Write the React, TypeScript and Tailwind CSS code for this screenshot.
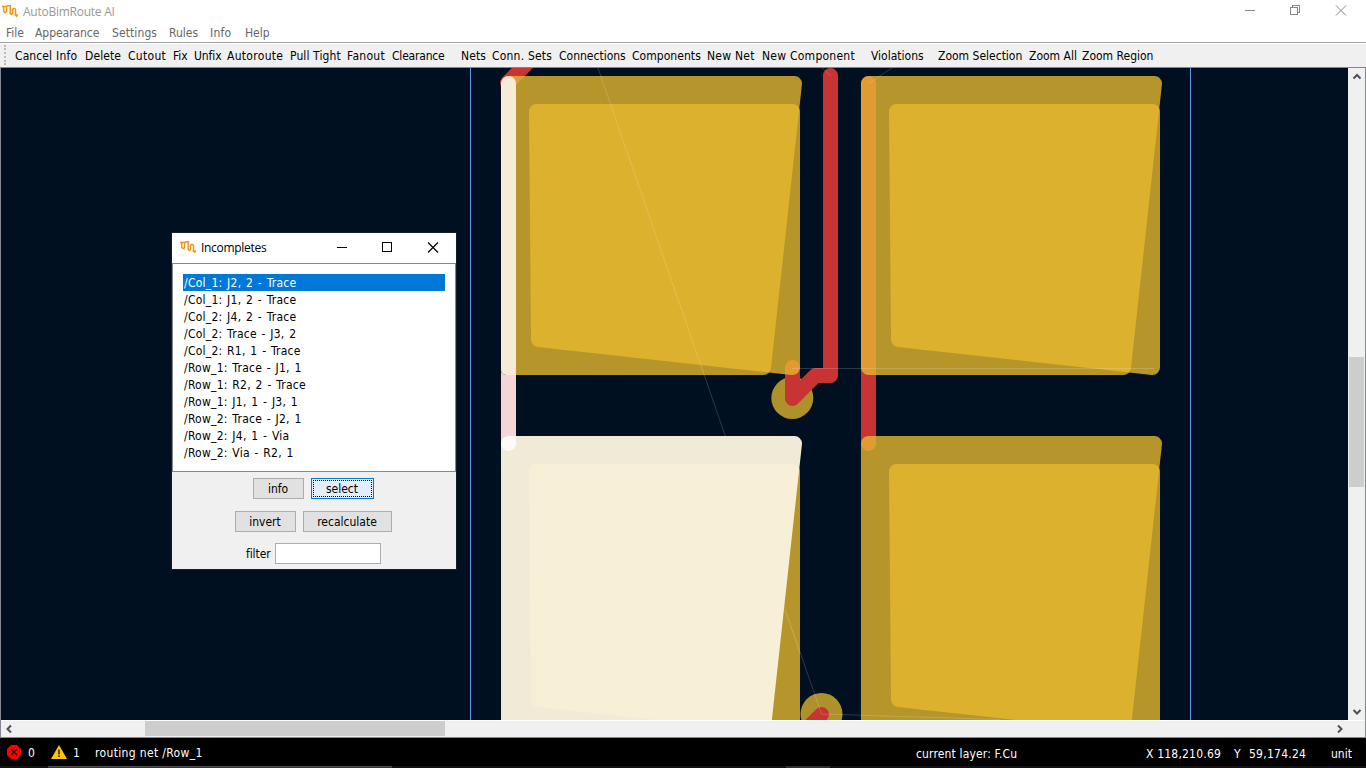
import React from "react";

const tools: [string, string][] = [
  ["Cancel", "w-[41px] tracking-[0.1px]"],
  ["Info", "w-[29px] tracking-[0.2px]"],
  ["Delete", "w-[43px] tracking-[0.1px]"],
  ["Cutout", "w-[45px] tracking-[0.3px]"],
  ["Fix", "w-[21px]"],
  ["Unfix", "w-[33px] tracking-[-0.1px]"],
  ["Autoroute", "w-[63px] tracking-[0.3px]"],
  ["Pull Tight", "w-[57px] tracking-[0.1px]"],
  ["Fanout", "w-[45px] tracking-[0.3px]"],
  ["Clearance", "w-[69px] tracking-[-0.2px]"],
  ["Nets", "w-[31px] tracking-[0.1px]"],
  ["Conn. Sets", "w-[67px] tracking-[0.2px]"],
  ["Connections", "w-[73px]"],
  ["Components", "w-[75px] tracking-[0.05px]"],
  ["New Net", "w-[55px] tracking-[0.25px]"],
  ["New Component", "w-[109px] tracking-[0.25px]"],
  ["Violations", "w-[67px]"],
  ["Zoom Selection", "w-[91px]"],
  ["Zoom All", "w-[53px]"],
  ["Zoom Region", "w-[80px]"],
];

const menus: [string, string][] = [
  ["File", "w-[29px]"],
  ["Appearance", "w-[77px] tracking-[-0.05px]"],
  ["Settings", "w-[57px] tracking-[0.1px]"],
  ["Rules", "w-[41px]"],
  ["Info", "w-[35px] tracking-[0.2px]"],
  ["Help", "w-[30px]"],
];

const incompletes = [
  "/Col_1: J2, 2 - Trace",
  "/Col_1: J1, 2 - Trace",
  "/Col_2: J4, 2 - Trace",
  "/Col_2: Trace - J3, 2",
  "/Col_2: R1, 1 - Trace",
  "/Row_1: Trace - J1, 1",
  "/Row_1: R2, 2 - Trace",
  "/Row_1: J1, 1 - J3, 1",
  "/Row_2: Trace - J2, 1",
  "/Row_2: J4, 1 - Via",
  "/Row_2: Via - R2, 1",
];

function Logo({ className = "" }: { className?: string }) {
  return (
    <svg width="16" height="12" viewBox="0 0 16 12" fill="none" stroke="#f0941a" strokeWidth="1.5" className={`shrink-0 ${className}`}>
      <path d="M0 1.500H5.500M1.700 1V6.500L3 7.500L4.500 6.500V1.500L6 .7H8.200V8.500L9.300 9.500L10.500 8.500V4.500L11.500 3.500H12.500L13.500 4.500V9.500M12.500 10H16M14.500 9.500V12" />
    </svg>
  );
}

const SHAPE_A = "508.5,83.5 794.5,83.5 763.5,367.5 508.5,367.5";
const SHAPE_B = "536.5,111.5 792.5,111.5 792.5,367.5 538.5,339.5";

function Pad({ x, y, selected = false }: { x: number; y: number; selected?: boolean }) {
  return (
    <g transform={`translate(${x} ${y})`} strokeWidth="15" strokeLinejoin="round">
      {selected && <polygon points={SHAPE_B} fill="#e7b92f" stroke="#e7b92f" opacity="0.79" />}
      <polygon
        points={SHAPE_A}
        fill={selected ? "#fbf4df" : "#e7b92f"}
        stroke={selected ? "#fbf4df" : "#e7b92f"}
        opacity={selected ? 0.955 : 0.79}
      />
      {!selected && <polygon points={SHAPE_B} fill="#e7b92f" stroke="#e7b92f" opacity="0.79" />}
    </g>
  );
}

function Board() {
  return (
    <svg width="1347" height="652" viewBox="1 68 1347 652" className="block shrink-0 bg-[#001020]">
      <path d="M470.5 68V720M1190.5 68V720" stroke="#5f93f2" />
      <g fill="#ae912b">
        <circle cx="792.3" cy="398" r="21" />
        <circle cx="821.5" cy="714" r="21" />
      </g>
      <g fill="none" stroke="#c83434" strokeWidth="15" strokeLinecap="round" strokeLinejoin="round">
        <path d="M507.5 83L538 52" />
        <path d="M830.5 75.5V375.5H815.5L792.5 398.5V367.5" />
        <path d="M868.5 83.5V443.5" />
        <path d="M821.5 714.5L795 741" />
      </g>
      <Pad x={0} y={0} />
      <Pad x={360} y={0} />
      <Pad x={360} y={360} />
      <path
        d="M598 68L821.5 714L1000 719.5M792 368.5H1154M822 68L830.5 75.5M892 68L868.5 83.5"
        stroke="#fff"
        strokeOpacity="0.17"
        fill="none"
      />
      <Pad x={0} y={360} selected />
      <path d="M785 610L800 653" stroke="#fff" strokeOpacity="0.15" />
      <path d="M501 83.5a7.5 7.5 0 0 1 15 0V375H506a5 5 0 0 1-5-5Z" fill="#f7ead6" />
      <path d="M501 370a5 5 0 0 0 5 5H516V436H501Z" fill="#f4d6d8" />
      <path d="M501 436H516V443.5a7.5 7.5 0 0 1-15 0Z" fill="#fefaf5" />
      <path d="M501 443.5a7.5 7.5 0 0 1 7.5-7.5H501Z" fill="#f4d6d8" />
    </svg>
  );
}

function Chevron({ d }: { d: string }) {
  return (
    <svg width="16" height="16" viewBox="0 0 16 16" fill="none" stroke="#505050" strokeWidth="2" className="shrink-0">
      <path d={d} />
    </svg>
  );
}

function DialogButton({ label, size, focused = false }: { label: string; size: string; focused?: boolean }) {
  return (
    <button
      className={`flex h-[21px] border ${size} ${focused ? "border-[#0078d7] bg-[#e2effa] p-px" : "border-[#adadad] bg-[#e1e1e1]"}`}
    >
      <span className={`flex h-full w-full items-center justify-center pr-px ${focused ? "border border-dotted border-black" : ""}`}>
        {label}
      </span>
    </button>
  );
}

function IncompletesDialog() {
  return (
    <div className="absolute top-[233px] left-[172px] flex h-[336px] w-[284px] flex-col bg-[#f0f0f0] shadow-[0_0_0_1px_#15202b]">
      <div className="flex h-[30px] shrink-0 items-center bg-white pl-2">
        <Logo className="-mt-0.5" />
        <span className="ml-[5px] w-[136px] font-['Open_Sans',sans-serif] text-[12px] tracking-[-0.3px]">Incompletes</span>
        <svg width="104" height="12" viewBox="0 0 104 12" fill="none" stroke="#000" className="-mt-0.5">
          <path d="M0 6.5h10M45.500 1.500h9v9h-9z" shapeRendering="crispEdges" />
          <path d="M91 1.500l10 10M101 1.500l-10 10" strokeWidth="1.2" />
        </svg>
      </div>
      <ul className="h-[209px] shrink-0 border border-[#828790] bg-white px-[10px] pt-[10px] tracking-[0.25px] [word-spacing:1px]">
        {incompletes.map((item, i) => (
          <li key={item} className={`h-[17px] pl-px leading-[19px] whitespace-pre ${i === 0 ? "bg-[#0078d7] text-white" : ""}`}>
            {item}
          </li>
        ))}
      </ul>
      <div className="flex gap-[7px] pt-[6px] pl-[81px]">
        <DialogButton label="info" size="w-[51px]" />
        <DialogButton label="select" size="w-[63px]" focused />
      </div>
      <div className="flex gap-[7px] pt-[12px] pl-[63px]">
        <DialogButton label="invert" size="w-[61px]" />
        <DialogButton label="recalculate" size="w-[89px]" />
      </div>
      <div className="flex items-center pt-[11px] pl-[74px]">
        <span className="w-[29px] tracking-[-0.1px]">filter</span>
        <div className="h-[21px] w-[106px] border border-[#abadb3] bg-white" />
      </div>
    </div>
  );
}

export default function App() {
  return (
    <div className="relative flex h-[768px] w-[1366px] flex-col overflow-hidden bg-white font-['DejaVu_Sans_Condensed','Noto_Sans',sans-serif] text-[12px] text-black">
      <header className="flex h-[22px] shrink-0 items-center pl-[2px] text-[#999]">
        <Logo />
        <span className="ml-[5px] w-[1222px] pt-px font-['Open_Sans',sans-serif] text-[12px] tracking-[-0.25px]">AutoBimRoute AI</span>
        <svg width="104" height="12" viewBox="0 0 104 12" fill="none" stroke="#888" className="-mt-0.5">
          <path d="M0 6.500h10M45.500 3.500h7v7h-7zM47.500 3v-2h7v7h-2" shapeRendering="crispEdges" />
          <path d="M91 1.500l10 10M101 1.500l-10 10" />
        </svg>
      </header>
      <nav className="flex h-[20px] shrink-0 items-center pt-px pl-[6px] text-[#666]">
        {menus.map(([label, w]) => (
          <span key={label} className={`shrink-0 whitespace-nowrap ${w}`}>{label}</span>
        ))}
      </nav>
      <div className="flex h-[26px] shrink-0 items-center border-t border-b border-t-[#a0a0a0] border-b-[#828790] bg-[#f0f0f0] shadow-[inset_0_1px_0_#fff]">
        <div className="mr-[9px] ml-[4px] h-[20px] w-[2px] border-l-2 border-dotted border-[#bbb]" />
        {tools.map(([label, w]) => (
          <span key={label} className={`shrink-0 pt-px whitespace-nowrap ${w}`}>{label}</span>
        ))}
      </div>
      <main className="flex h-[652px] shrink-0 border-r border-l border-[#828790]">
        <Board />
        <div className="flex w-[17px] shrink-0 flex-col items-center bg-[#f0f0f0]">
          <Chevron d="M4.500 10.500L8 7L11.500 10.500" />
          <div className="mt-[273px] h-[130px] w-[15px] bg-[#cdcdcd]" />
          <div className="mt-auto"><Chevron d="M4.500 6L8 9.500L11.500 6" /></div>
        </div>
      </main>
      <div className="flex h-[18px] shrink-0 items-center border-r border-b border-l border-[#828790] bg-[#f0f0f0] shadow-[inset_0_1px_0_#fff]">
        <Chevron d="M10 4.500L6.500 8L10 11.500" />
        <div className="ml-[128px] h-[15px] w-[300px] bg-[#cdcdcd]" />
        <div className="mr-[17px] ml-auto"><Chevron d="M6 4.500L9.500 8L6 11.500" /></div>
      </div>
      <footer className="flex h-[28px] shrink-0 items-center bg-black pl-[7px] text-white">
        <svg width="14" height="14" viewBox="0 0 14 14">
          <path d="M4 0h6l4 4v6l-4 4H4L0 10V4z" fill="#f00" />
          <path d="M4 4l6 6M10 4l-6 6" stroke="#200" strokeWidth="1.500" />
        </svg>
        <span className="ml-[7px] w-[22px] pt-0.5">0</span>
        <svg width="18" height="14" viewBox="0 0 18 14">
          <path d="M9 0L17 14H1Z" fill="#fdc60b" />
          <path d="M9 4.500V9.500M9 10.500v1.500" stroke="#4a3600" strokeWidth="1.800" />
        </svg>
        <span className="ml-[5px] w-[22px] pt-0.5">1</span>
        <span className="w-[821px] pt-0.5 tracking-[0.35px]">routing net /Row_1</span>
        <span className="w-[230px] pt-[3px] tracking-[0.15px]">current layer: F.Cu</span>
        <span className="w-[88px] pt-[3px] tracking-[0.2px] whitespace-nowrap">X 118,210.69</span>
        <span className="w-[15px] pt-[3px]">Y</span>
        <span className="w-[82px] pt-[3px] tracking-[0.25px]">59,174.24</span>
        <span className="pt-[3px]">unit</span>
      </footer>
      <div className="flex h-[2px] shrink-0 bg-[#121212] pl-[48px]">
        <div className="h-[2px] w-[344px] border-t border-[#555] bg-[#333]" />
        <div className="ml-[394px] h-[2px] w-[44px] bg-[#303030]" />
      </div>
      <IncompletesDialog />
    </div>
  );
}
